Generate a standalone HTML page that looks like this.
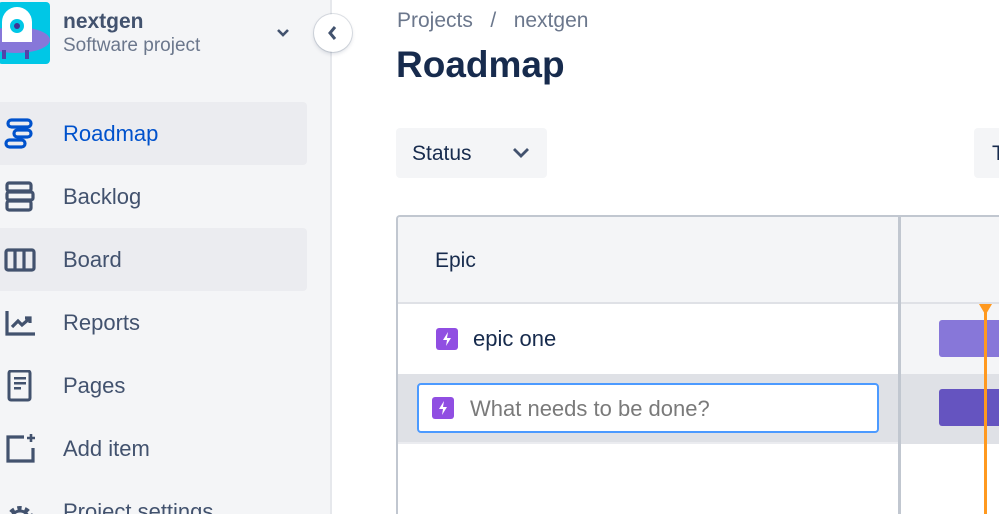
<!DOCTYPE html>
<html><head><meta charset="utf-8"><style>
*{box-sizing:border-box;margin:0;padding:0}
html,body{width:999px;height:514px;overflow:hidden}
body{background:#fff;font-family:"Liberation Sans",sans-serif;position:relative}
.side{position:absolute;left:0;top:0;width:332px;height:514px;background:#f4f5f7;border-right:2px solid #e6e8ec}
.logo{position:absolute;left:-2px;top:2px;width:52px;height:62px;background:#00c7e6;border-radius:4px;overflow:hidden}
.pn{position:absolute;left:63px;top:10px;font-size:21px;font-weight:bold;color:#42526e}
.ps{position:absolute;left:63px;top:35px;font-size:19px;color:#6b778c}
.item{position:absolute;left:0;width:307px;height:63px;border-radius:0 4px 4px 0;font-size:22px;color:#42526e}
.item span{position:absolute;left:63px;top:19px}
.item svg{position:absolute;left:2px;top:16px}
.hl{background:#ebecf0}
.coll{position:absolute;left:314px;top:14px;width:38px;height:38px;border-radius:50%;background:#fff;box-shadow:0 0 0 1px rgba(9,30,66,.12),0 2px 4px rgba(9,30,66,.15)}
.bc{position:absolute;left:397px;top:9px;font-size:21px;color:#6b778c}
h1{position:absolute;left:396px;top:44px;font-size:37px;color:#172b4d;font-weight:bold}
.btn{position:absolute;top:128px;height:50px;background:#f4f5f7;border-radius:4px}
.tbl{position:absolute;left:396px;top:215px;width:620px;height:299px;border:2px solid #c1c7d0;border-bottom:none;border-radius:4px 4px 0 0;overflow:hidden}
</style></head><body>
<div class="side">
 <div class="logo"><svg width="52" height="62"><ellipse cx="18" cy="38" rx="34" ry="13" fill="#8777d9"/><rect x="4" y="48" width="4" height="9" fill="#5243aa"/><rect x="27" y="48" width="4" height="9" fill="#5243aa"/><path d="M4 40 V20 a15 15 0 0 1 30 0 V40Z" fill="#fff"/><circle cx="19" cy="24" r="7" fill="#00c7e6"/><circle cx="19" cy="24" r="3" fill="#403294"/></svg></div>
 <div class="pn">nextgen</div><div class="ps">Software project</div>
 <svg style="position:absolute;left:275px;top:27px" width="16" height="12"><path d="M3 3l5 5 5-5" stroke="#42526e" stroke-width="2.6" fill="none"/></svg>
 <div class="item hl" style="top:102px;color:#0052cc"><svg width="34" height="32"><g fill="none" stroke="#0052cc" stroke-width="3.2"><rect x="6" y="2" width="23" height="7" rx="3.5"/><rect x="12" y="12" width="17" height="7" rx="3.5"/><rect x="4" y="22" width="19" height="7" rx="3.5"/></g></svg><span>Roadmap</span></div>
 <div class="item" style="top:165px"><svg width="34" height="32"><g fill="none" stroke="#42526e" stroke-width="3.2"><rect x="5" y="2" width="24" height="8" rx="2"/><rect x="5" y="11" width="26" height="8" rx="2"/><rect x="5" y="20" width="24" height="9" rx="2"/></g></svg><span>Backlog</span></div>
 <div class="item hl" style="top:228px"><svg width="34" height="32"><g fill="none" stroke="#42526e" stroke-width="3.2"><rect x="4" y="6" width="28" height="20" rx="2"/><path d="M13 6v20M22 6v20"/></g></svg><span>Board</span></div>
 <div class="item" style="top:291px"><svg width="34" height="32"><g fill="none" stroke="#42526e" stroke-width="3.2"><path d="M5 4v23h28"/><path d="M10 20l6-6 4 4 7-6"/><path d="M23 11h5v5"/></g></svg><span>Reports</span></div>
 <div class="item" style="top:354px"><svg width="34" height="32"><g fill="none" stroke="#42526e" stroke-width="3"><rect x="7" y="1" width="21" height="29" rx="2"/></g><g fill="#42526e"><rect x="12" y="7" width="12" height="2.5"/><rect x="12" y="12" width="12" height="2.5"/><rect x="12" y="17" width="7" height="2.5"/></g></svg><span>Pages</span></div>
 <div class="item" style="top:417px"><svg width="34" height="32"><g fill="none" stroke="#42526e" stroke-width="3.2"><path d="M22 4H6v24h25V15"/><path d="M29 1v8M25 5h8" stroke-width="2.6"/></g></svg><span>Add item</span></div>
 <div class="item" style="top:480px"><svg width="34" height="32"><circle cx="18" cy="24" r="11" fill="none" stroke="#42526e" stroke-width="6" stroke-dasharray="4 3"/><circle cx="18" cy="24" r="9" fill="none" stroke="#42526e" stroke-width="3"/></svg><span>Project settings</span></div>
</div>
<div class="coll"><svg width="38" height="38"><path d="M21 13l-5 6 5 6" stroke="#42526e" stroke-width="3" fill="none"/></svg></div>
<div class="bc">Projects &nbsp;&nbsp;/&nbsp;&nbsp; nextgen</div>
<h1>Roadmap</h1>
<div class="btn" style="left:396px;width:151px"><span style="position:absolute;left:16px;top:14px;font-size:21px;color:#172b4d">Status</span><svg style="position:absolute;left:115px;top:18px" width="20" height="14"><path d="M3 3l7 7 7-7" stroke="#42526e" stroke-width="2.8" fill="none"/></svg></div>
<div class="btn" style="left:974px;width:60px"><span style="position:absolute;left:18px;top:14px;font-size:21px;color:#172b4d">T</span></div>
<div class="tbl">
 <div style="position:absolute;left:0;top:0;width:100%;height:87px;background:#f4f5f7;border-bottom:2px solid #dfe1e6"></div>
 <div style="position:absolute;left:37px;top:32px;font-size:21px;color:#172b4d">Epic</div>
 <div style="position:absolute;left:0;top:157px;width:100%;height:70px;background:#dfe1e6;border-bottom:2px solid #ebecf0"></div>
 <div style="position:absolute;left:500px;top:0;width:3px;height:100%;background:#c1c7d0"></div>
 <div style="position:absolute;left:503px;top:87px;width:200px;height:70px;background:#f4f5f7"></div>
 <div style="position:absolute;left:503px;top:157px;width:200px;height:70px;background:#dfe1e6"></div>
 <div style="position:absolute;left:541px;top:103px;width:100px;height:37px;background:#8777d9;border-radius:3px"></div>
 <div style="position:absolute;left:541px;top:172px;width:100px;height:37px;background:#6554c0;border-radius:3px"></div>
 <div style="position:absolute;left:586px;top:88px;width:3px;height:300px;background:#ff991f"></div>
 <svg style="position:absolute;left:581px;top:87px" width="14" height="12"><path d="M0 0h13l-6.5 11z" fill="#ff991f"/></svg>
 <div style="position:absolute;left:38px;top:111px;width:22px;height:22px;background:#904ee2;border-radius:3px"><svg width="22" height="22"><path d="M12 4l-5 8h4l-1 6 5-8h-4z" fill="#fff"/></svg></div>
 <div style="position:absolute;left:75px;top:109px;font-size:22px;color:#172b4d">epic one</div>
 <div style="position:absolute;left:19px;top:166px;width:462px;height:50px;background:#fff;border:2px solid #4c9aff;border-radius:4px"></div>
 <div style="position:absolute;left:34px;top:180px;width:22px;height:22px;background:#904ee2;border-radius:3px"><svg width="22" height="22"><path d="M12 4l-5 8h4l-1 6 5-8h-4z" fill="#fff"/></svg></div>
 <div style="position:absolute;left:72px;top:179px;font-size:22px;color:#7a7a7a">What needs to be done?</div>
</div>
</body></html>
